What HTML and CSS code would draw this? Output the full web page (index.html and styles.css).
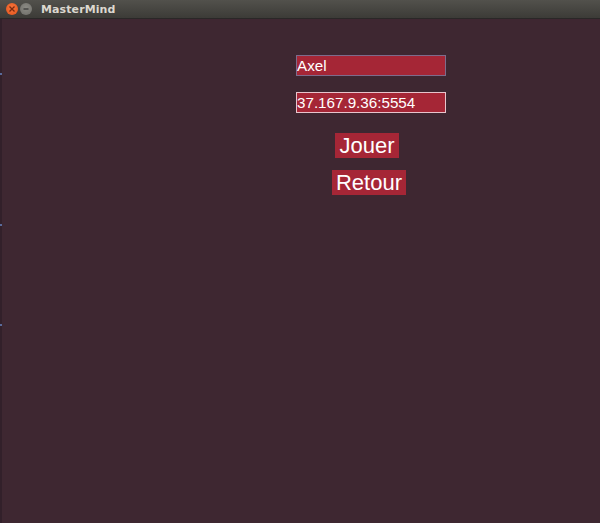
FILE: index.html
```html
<!DOCTYPE html>
<html>
<head>
<meta charset="utf-8">
<link rel="stylesheet" href="styles.css">
</head>
<body>
<div class="window">
  <div class="titlebar">
    <span class="btn close"><svg width="8" height="8" viewBox="0 0 8 8"><path d="M1.5 1.5L6.5 6.5M6.5 1.5L1.5 6.5" stroke="#7a2a10" stroke-width="1.3"/></svg></span>
    <span class="btn min"><svg width="8" height="8" viewBox="0 0 8 8"><path d="M1.5 4H6.5" stroke="#3a3a38" stroke-width="1.3"/></svg></span>
    <span class="title">MasterMind</span>
  </div>
  <div class="content">
    <div class="edge"><i></i><i></i><i></i></div>
    <div class="form">
      <div class="field">Axel</div>
      <div class="field focused">37.167.9.36:5554</div>
      <div class="button jouer">Jouer</div>
      <div class="button retour">Retour</div>
    </div>
  </div>
</div>
</body>
</html>
```
FILE: styles.css
```css
html, body {
  margin: 0;
  padding: 0;
  width: 600px;
  height: 523px;
  overflow: hidden;
  background: #3e2731;
}
.window {
  display: flex;
  flex-direction: column;
  height: 523px;
}
.titlebar {
  height: 19px;
  flex: none;
  display: flex;
  align-items: center;
  background: linear-gradient(#52514c, #3c3b37);
  border-bottom: 1px solid #2a2727;
  padding-left: 6px;
  box-sizing: border-box;
}
.btn {
  width: 12px;
  height: 12px;
  border-radius: 50%;
  display: flex;
  align-items: center;
  justify-content: center;
  margin-right: 2px;
}
.btn.close {
  background: radial-gradient(circle at 50% 40%, #f7763c, #e2531c);
}
.btn.min {
  background: radial-gradient(circle at 50% 40%, #8c8b85, #6e6d68);
}
.title {
  margin-left: 7px;
  font-family: "DejaVu Sans", sans-serif;
  font-weight: bold;
  font-size: 11px;
  color: #dcd8cf;
  letter-spacing: 0.1px;
}
.content {
  flex: 1;
  display: flex;
  position: relative;
}
.edge {
  width: 2px;
  background: #32202a;
  position: relative;
}
.edge i {
  position: absolute;
  left: 0;
  width: 2px;
  height: 2px;
  background: #5a6a9a;
}
.edge i:nth-child(1) { top: 54px; }
.edge i:nth-child(2) { top: 205px; }
.edge i:nth-child(3) { top: 305px; }
.form {
  margin-left: 294px;
  padding-top: 36px;
  width: 150px;
  display: flex;
  flex-direction: column;
  align-items: center;
  font-family: "Liberation Sans", Arial, sans-serif;
  color: #ffffff;
}
.field {
  width: 150px;
  height: 21px;
  box-sizing: border-box;
  background: #a52636;
  border: 1px solid #7d6c8c;
  font-size: 15.2px;
  line-height: 19px;
  padding-left: 0px;
  margin-bottom: 16px;
  white-space: nowrap;
}
.field.focused {
  border-color: #e8c4cc;
}
.button {
  background: #a52636;
  font-size: 22px;
  line-height: 25px;
  padding: 0 4px;
}
.jouer {
  margin-top: 4px;
  margin-left: -8px;
}
.retour {
  margin-top: 12px;
  margin-left: -4px;
}
```
